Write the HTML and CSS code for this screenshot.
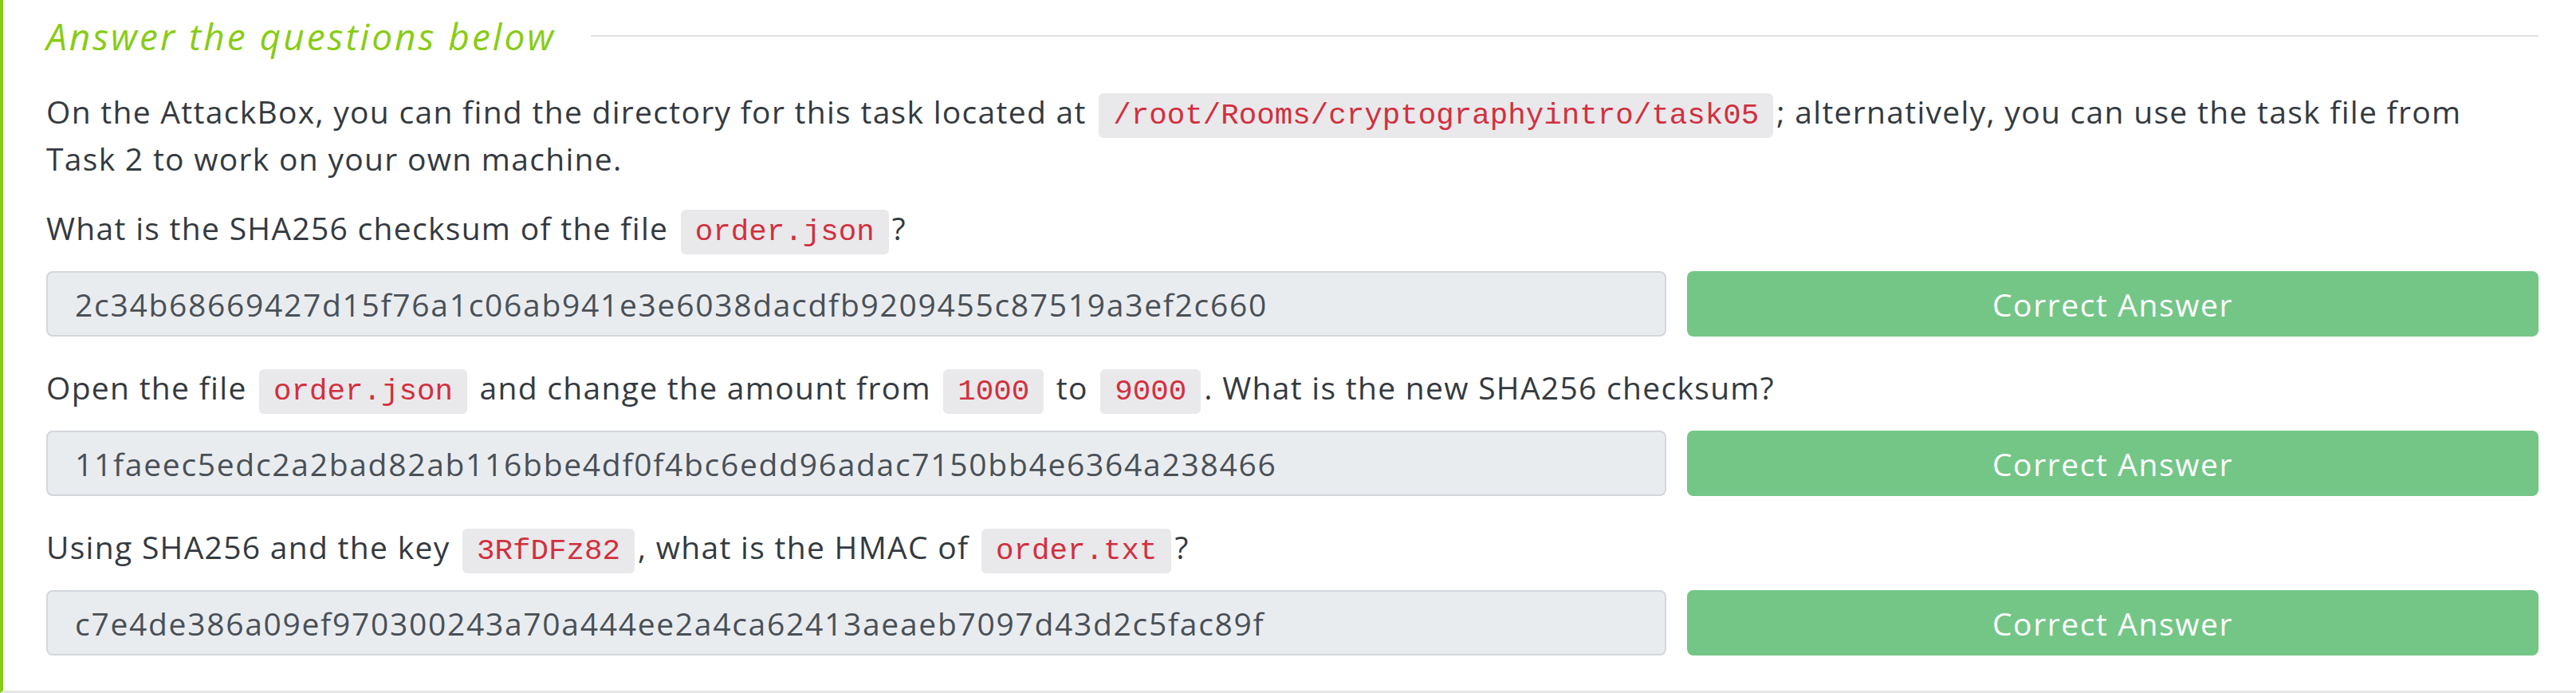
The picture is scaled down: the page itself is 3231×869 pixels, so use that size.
FILE: index.html
```html
<!DOCTYPE html>
<html lang="en">
<head>
<meta charset="utf-8">
<title>Answer the questions below</title>
<link rel="stylesheet" href="styles.css">
</head>
<body>
<section class="panel">
  <div class="heading-row">
    <h5 class="heading">Answer the questions below</h5>
    <div class="rule"></div>
  </div>
  <p class="intro">On the AttackBox, you can find the directory for this task located at <code>/root/Rooms/cryptographyintro/task05</code><span>; alternatively, you can use the task file from</span><br><span>Task 2 to work on your own machine.</span></p>

  <p class="q">What is the SHA256 checksum of the file <code>order.json</code>?</p>
  <div class="answer">
    <div class="field">2c34b68669427d15f76a1c06ab941e3e6038dacdfb9209455c87519a3ef2c660</div>
    <button class="btn">Correct Answer</button>
  </div>

  <p class="q">Open the file <code>order.json</code> and change the amount from <code>1000</code> to <code>9000</code>. What is the new SHA256 checksum?</p>
  <div class="answer">
    <div class="field">11faeec5edc2a2bad82ab116bbe4df0f4bc6edd96adac7150bb4e6364a238466</div>
    <button class="btn">Correct Answer</button>
  </div>

  <p class="q">Using SHA256 and the key <code>3RfDFz82</code>, what is the HMAC of <code>order.txt</code>?</p>
  <div class="answer">
    <div class="field">c7e4de386a09ef970300243a70a444ee2a4ca62413aeaeb7097d43d2c5fac89f</div>
    <button class="btn">Correct Answer</button>
  </div>
</section>
</body>
</html>
```
FILE: styles.css
```css
html, body {
  margin: 0;
  padding: 0;
  background: #ffffff;
}

.panel {
  box-sizing: border-box;
  height: 869px;
  border-left: 4px solid #88cc14;
  border-bottom: 3px solid #e6e6e6;
  padding: 0 47px 0 54px;
  font-family: "Open Sans", "Noto Sans", sans-serif;
  font-size: 39px;
  letter-spacing: 1.3px;
  color: #343a40;
}

.heading-row {
  height: 90px;
  display: flex;
  align-items: center;
  gap: 44px;
}

.heading {
  margin: 0;
  font-size: 46px;
  font-weight: 400;
  font-style: italic;
  letter-spacing: 3px;
  color: #88cc14;
  white-space: nowrap;
}

.rule {
  flex: 1;
  height: 2px;
  background: #e0e0e0;
}

.intro {
  margin: 20px 0 0;
  line-height: 59px;
}

.q {
  margin: 28px 0 0;
  line-height: 59px;
}

.answer + .q {
  margin-top: 34px;
}

code {
  font-family: "Liberation Mono", "DejaVu Sans Mono", monospace;
  font-size: 37.5px;
  line-height: 1;
  letter-spacing: 0;
  color: #d2303e;
  background: #e9e9ec;
  border-radius: 6px;
  padding: 7px 18px;
  margin: 0 4px;
}

.answer {
  margin-top: 25px;
  display: flex;
  gap: 26px;
  height: 82px;
}

.field {
  box-sizing: border-box;
  width: 2032px;
  flex: none;
  height: 82px;
  background: #e9ecef;
  border: 2px solid #d3d7dc;
  border-radius: 8px;
  padding: 0 34px;
  display: flex;
  align-items: center;
  font-size: 39px;
  letter-spacing: 1.7px;
  color: #495057;
}

.btn {
  flex: 1;
  height: 82px;
  border: none;
  border-radius: 8px;
  background: #74c687;
  color: #ffffff;
  font-family: "Open Sans", "Noto Sans", sans-serif;
  font-size: 39px;
  letter-spacing: 1.6px;
}
```
